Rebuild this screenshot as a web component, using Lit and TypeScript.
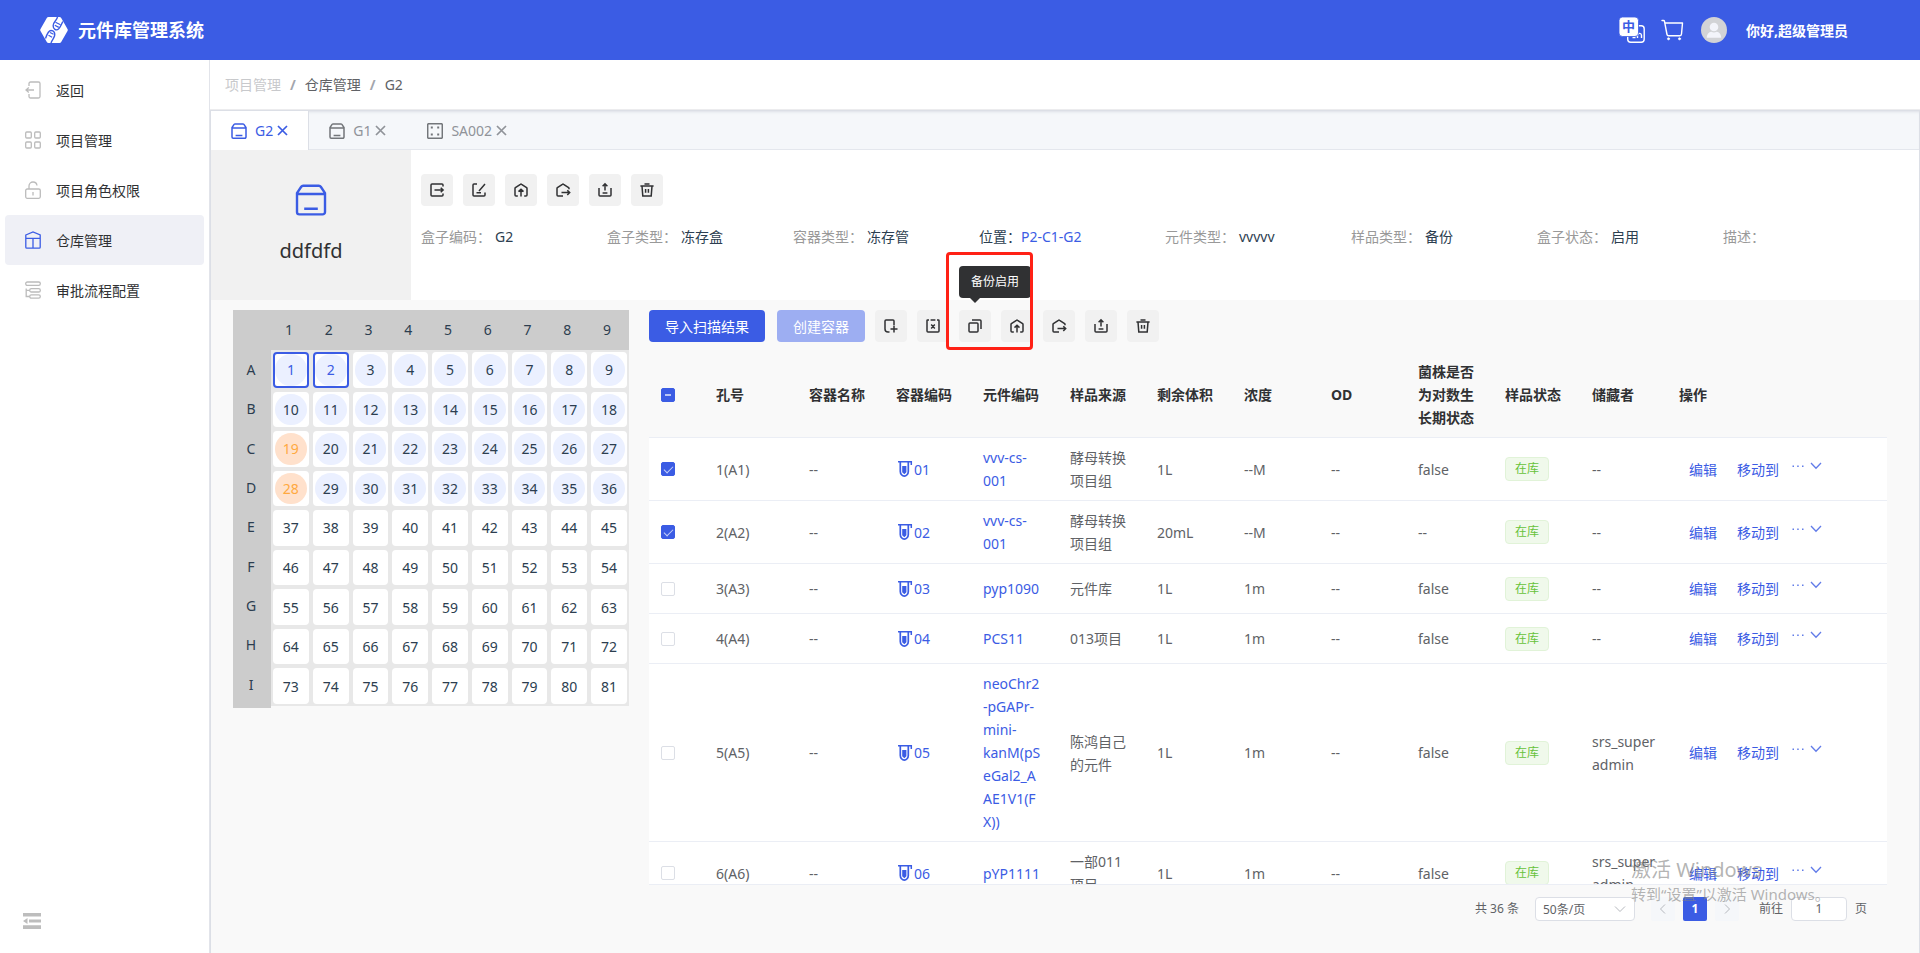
import { LitElement, html, css, svg, nothing } from "lit";
import { customElement, state } from "lit/decorators.js";
import { classMap } from "lit/directives/class-map.js";

const HOUSE = "V5.5a1 1 0 0 1 .4-.8L6.4 1.3a1 1 0 0 1 1.2 0l5 3.4a1 1 0 0 1 .4.8";

const TOOL_ICONS: Record<string, string> = {
  moveOut: "M13 3.5V2a1 1 0 0 0-1-1H2a1 1 0 0 0-1 1v10a1 1 0 0 0 1 1h10a1 1 0 0 0 1-1v-1.5M4.5 7H13M10.7 4.8L13.1 7L10.7 9.2",
  edit: "M5 1H2a1 1 0 0 0-1 1v10a1 1 0 0 0 1 1h10a1 1 0 0 0 1-1V9.5M13 1L7 8M4.5 9.8h4.5",
  storeIn: "M3.8 13H2a1 1 0 0 1-1-1" + HOUSE + "V12a1 1 0 0 1-1 1h-1.8M7 13.5V6.5M4.5 8.6L7 6.2L9.5 8.6",
  storeOut: "M7 13H2a1 1 0 0 1-1-1" + HOUSE + "V6.3M5.5 9.6H13.6M11.3 7.2L13.7 9.6L11.3 12",
  upload: "M1 5v7a1 1 0 0 0 1 1h10a1 1 0 0 0 1-1V5M7 7.5V1M4.6 3.2L7 .8L9.4 3.2M4.6 10h4.8",
  trash: "M.4 3h13.2M4.5 .9h5M2 3l.8 10h8.4L12 3M5.6 6v3.8M8.4 6v3.8",
  addTube: "M5.5 13H4a3 3 0 0 1-3-3V2a1 1 0 0 1 1-1h7a1 1 0 0 1 1 1v4M10 6.5v7M6.5 10h7",
  clear: "M3 1H1.6a.6.6 0 0 0-.6.6V12a1 1 0 0 0 1 1h10a1 1 0 0 0 1-1V1.6a.6.6 0 0 0-.6-.6H11M4.600 1h4.800M5.200 5.600l3.600 3.800M8.800 5.600l-3.600 3.800",
  copy: "M2 4h7a1 1 0 0 1 1 1v7a1 1 0 0 1-1 1H2a1 1 0 0 1-1-1V5a1 1 0 0 1 1-1zM4 1h8a1 1 0 0 1 1 1v8",
};

const toolIcon = (name: string) => html`
  <svg class="tool-icon" viewBox="0 0 14 14" aria-hidden="true"><path d=${TOOL_ICONS[name]} /></svg>
`;

const toolButton = (icon: string, label: string) => html`
  <button class="tool" type="button" aria-label=${label}>${toolIcon(icon)}</button>
`;

const boxShape = svg`
  <path d="M1 5h14M1 5V14a1.200 1.200 0 0 0 1.200 1.200h11.600A1.200 1.200 0 0 0 15 14V4.500L12.900 1.400a1.200 1.200 0 0 0-1-.5H4.100a1.200 1.200 0 0 0-1 .5L1 4.500zM4.600 12.400h6.800" />
`;

const NAV = [
  { label: "返回", icon: svg`<path d="M4 5V2.500A1.500 1.500 0 0 1 5.500 1h8A1.500 1.500 0 0 1 15 2.500v13a1.500 1.500 0 0 1-1.500 1.500h-8A1.500 1.500 0 0 1 4 15.500V13M1 9h8M3.800 6.500L1 9l2.800 2.500" />` },
  { label: "项目管理", icon: svg`<rect x=".7" y="1" width="5.600" height="6" rx="1" /><rect x="9.700" y="1" width="5.600" height="6" rx="1" /><rect x=".7" y="11" width="5.600" height="6" rx="1" /><rect x="9.700" y="11" width="5.600" height="6" rx="1" />` },
  { label: "项目角色权限", icon: svg`<rect x=".7" y="8" width="14.600" height="9.300" rx="1.500" /><path d="M4 8V5a4 4 0 0 1 4-4 4 4 0 0 1 4 3.500M8 11v3.500" />` },
  { label: "仓库管理", active: true, icon: svg`<path d="M.8 4L8 1l7.200 3v12.200a1 1 0 0 1-1 1H1.800a1 1 0 0 1-1-1zM.8 7.300h14.400M8 7.300v9.900" />` },
  { label: "审批流程配置", icon: svg`<rect x=".7" y="1" width="14.600" height="3.400" rx="1.600" /><rect x="4.700" y="7.600" width="10.600" height="3.400" rx="1.600" /><rect x="4.700" y="13.800" width="10.600" height="3.400" rx="1.600" /><path d="M1.200 7.500v8h3.500M1.200 9.300h3.500" />` },
];

const INFO = [
  { label: "盒子编码：", value: "G2" },
  { label: "盒子类型：", value: "冻存盒" },
  { label: "容器类型：", value: "冻存管" },
  { label: "位置：", value: "P2-C1-G2", link: true },
  { label: "元件类型：", value: "vvvvv" },
  { label: "样品类型：", value: "备份" },
  { label: "盒子状态：", value: "启用" },
  { label: "描述：", value: "" },
];

const HEADERS = ["孔号", "容器名称", "容器编码", "元件编码", "样品来源", "剩余体积", "浓度", "OD", "菌株是否为对数生长期状态", "样品状态", "储藏者", "操作"];

interface Row {
  hole: string;
  code: string;
  part: string;
  source: string;
  volume: string;
  density: string;
  log: string;
  owner: string;
}

const ROWS: Row[] = [
  { hole: "1(A1)", code: "01", part: "vvv-cs-\n001", source: "酵母转换项目组", volume: "1L", density: "--M", log: "false", owner: "--" },
  { hole: "2(A2)", code: "02", part: "vvv-cs-\n001", source: "酵母转换项目组", volume: "20mL", density: "--M", log: "--", owner: "--" },
  { hole: "3(A3)", code: "03", part: "pyp1090", source: "元件库", volume: "1L", density: "1m", log: "false", owner: "--" },
  { hole: "4(A4)", code: "04", part: "PCS11", source: "013项目", volume: "1L", density: "1m", log: "false", owner: "--" },
  { hole: "5(A5)", code: "05", part: "neoChr2\n-pGAPr-\nmini-\nkanM(pS\neGal2_A\nAE1V1(F\nX))", source: "陈鸿自己的元件", volume: "1L", density: "1m", log: "false", owner: "srs_super\nadmin" },
  { hole: "6(A6)", code: "06", part: "pYP1111", source: "一部011\n项目", volume: "1L", density: "1m", log: "false", owner: "srs_super\nadmin" },
];

@customElement("app-root")
export class AppRoot extends LitElement {
  @state() private selected = new Set<number>([0, 1]);

  static styles = css`
    :host {
      --brand: #3b5ce4;
      --line: #ebeef5;
      display: flex;
      flex-direction: column;
      height: 100vh;
      overflow: hidden;
      position: relative;
      font: 14px/23px "Noto Sans", "Noto Sans CJK SC", sans-serif;
      color: #303133;
      background: #fff;
    }
    * { box-sizing: border-box; }
    button, input, select { font: inherit; color: inherit; margin: 0; }
    button { border: 0; background: none; padding: 0; cursor: pointer; }
    a { color: inherit; text-decoration: none; }
    svg { display: block; fill: none; stroke: currentColor; flex: none; }

    .header {
      display: flex;
      align-items: center;
      height: 60px;
      flex: none;
      padding: 0 72px 0 40px;
      background: var(--brand);
      color: #fff;
    }
    .logo { width: 28px; height: 26px; margin-right: 10px; stroke: none; }
    .title { margin: 0; font-size: 18px; font-weight: 700; flex: 1; }
    .lang { width: 26px; height: 26px; margin-right: 16px; }
    .lang text { font: 700 13px "Noto Sans CJK SC", sans-serif; stroke: none; fill: var(--brand); }
    .cart { width: 23px; height: 22px; margin-right: 17px; }
    .avatar { width: 26px; height: 26px; margin-right: 19px; stroke: none; }
    .user { font-weight: 700; }

    .body { flex: 1; display: flex; min-height: 0; }
    .sidebar {
      width: 210px;
      flex: none;
      display: flex;
      flex-direction: column;
      justify-content: space-between;
      padding: 5px 5px 24px;
      border-right: 1px solid #e2e4ea;
    }
    .nav-item {
      display: flex;
      align-items: center;
      gap: 15px;
      height: 50px;
      padding: 0 20px;
      border-radius: 4px;
    }
    .nav-item.active { background: #eff0f6; }
    .nav-icon { width: 16px; height: 18px; color: #bcbcbc; stroke-width: 1.300; }
    .active .nav-icon { color: var(--brand); }
    .collapse { margin-left: 18px; width: 18px; color: #bdbdbd; }
    .collapse svg { width: 18px; height: 16px; fill: currentColor; stroke: none; }

    .main { flex: 1; min-width: 0; display: flex; flex-direction: column; }
    .crumbs {
      display: flex;
      align-items: center;
      gap: 8px;
      height: 50px;
      flex: none;
      padding: 0 15px;
      border-bottom: 1px solid #ececee;
      color: #606266;
    }
    .crumbs a:first-child { color: #c8c9cc; }
    .sep { font-weight: 700; color: #a3a6ad; padding: 0 1px; }

    .card {
      flex: 1;
      min-height: 0;
      display: flex;
      flex-direction: column;
      border: 1px solid #dcdfe6;
      border-bottom: 0;
      background: #f9f9f9;
    }
    .tabs {
      display: flex;
      height: 39px;
      flex: none;
      background: #f5f7fa;
      border-bottom: 1px solid #e4e7ed;
      box-shadow: inset 0 3px 3px -2px #dcdfe6;
    }
    .tab {
      display: flex;
      align-items: center;
      gap: 8px;
      padding: 0 20px;
      height: 39px;
      color: #909399;
      border-right: 1px solid transparent;
    }
    .tab.active { background: #fff; color: var(--brand); border-right-color: #dcdfe6; }
    .tab-icon { width: 16px; height: 16px; stroke-width: 1.500; color: #73767a; }
    .active .tab-icon { color: var(--brand); }
    .tab-label { display: flex; align-items: center; gap: 4px; }
    .close { width: 11px; height: 11px; stroke-width: 1.700; }

    .summary { display: flex; min-height: 150px; background: #fff; }
    .box {
      width: 200px;
      flex: none;
      display: flex;
      flex-direction: column;
      align-items: center;
      justify-content: center;
      gap: 20px;
      background: #f1f1f1;
      font-size: 20px;
      line-height: 30px;
    }
    .box svg { width: 32px; height: 32px; color: var(--brand); stroke-width: 1.200; }
    .details { flex: 1; padding: 24px 10px; display: flex; flex-direction: column; gap: 20px; }
    .tools { display: flex; gap: 10px; }
    .tool {
      width: 32px;
      height: 32px;
      display: grid;
      place-items: center;
      border-radius: 4px;
      background: #f1f1f1;
      color: #303133;
    }
    .tool-icon { width: 14px; height: 14px; stroke-width: 1.500; overflow: visible; }
    .facts { display: grid; grid-template-columns: repeat(8, 1fr); margin: 0; color: #2c3e50; line-height: 22px; }
    .fact { display: flex; gap: 4px; }
    .fact dt { color: #999; }
    .fact.linked dt { color: #2c3e50; }
    .fact dd { margin: 0; }
    .fact.linked dd { color: var(--brand); }
    .fact.linked { gap: 0; }

    .content {
      flex: 1;
      min-height: 0;
      display: flex;
      align-items: stretch;
      gap: 20px;
      padding: 10px 32px 0 22px;
    }
    .plate {
      flex: none;
      align-self: flex-start;
      width: 396px;
      display: grid;
      grid-template-columns: 38px 1fr;
      grid-template-rows: 40px 358px;
      color: #2c3e50;
      background: linear-gradient(#ccc, #ccc) 0 0 / 38px 100% no-repeat;
      text-align: center;
    }
    .cols {
      grid-column: 2;
      display: grid;
      grid-template-columns: repeat(9, 1fr);
      gap: 4px;
      align-items: center;
      padding: 0 4px 2px 0;
      background: #ccc;
    }
    .letters { display: grid; grid-template-rows: repeat(9, 1fr); align-items: center; padding: 0 2px 4px 0; }
    .wells {
      display: grid;
      grid-template: repeat(9, 1fr) / repeat(9, 1fr);
      gap: 4px;
      padding: 2px;
      margin-bottom: 2px;
      background: #e8e8e8;
    }
    .well {
      display: grid;
      place-items: center;
      border-radius: 4px;
      border: 2px solid #fff;
      background: #fff;
      min-width: 0;
      min-height: 0;
    }
    .well span { width: 100%; height: 100%; display: grid; place-items: center; border-radius: 50%; }
    .well.filled span { background: #ebf0ff; }
    .well.warn span { background: #ffe1cc; color: #ffa940; }
    .well.picked { border-color: var(--brand); color: var(--brand); }

    .panel { flex: 1; min-width: 0; display: flex; flex-direction: column; }
    .actions { display: flex; gap: 10px; margin-bottom: 10px; }
    .primary-group { display: flex; gap: 12px; }
    .primary {
      height: 32px;
      padding: 0 16px;
      border-radius: 4px;
      background: var(--brand);
      color: #fff;
    }
    .primary:disabled { background: #9daef2; }
    .hinted { position: relative; }
    .tooltip {
      position: absolute;
      left: 0;
      bottom: 44px;
      z-index: 1;
      padding: 0 12px;
      border-radius: 4px;
      background: #303133;
      color: #fff;
      font-size: 12px;
      line-height: 32px;
      white-space: nowrap;
    }
    .tooltip::after {
      content: "";
      position: absolute;
      left: 11px;
      top: 100%;
      border: 5px solid transparent;
      border-top-color: #303133;
    }
    .marker {
      position: absolute;
      left: -13px;
      top: -58px;
      z-index: 2;
      width: 87px;
      height: 98px;
      border: 3px solid #ff2116;
      border-radius: 4px;
      pointer-events: none;
    }

    .table-wrap { flex: 1; min-height: 0; overflow: hidden; border-bottom: 1px solid var(--line); }
    table { width: 100%; table-layout: fixed; border-collapse: separate; border-spacing: 0; }
    .c-check { width: 55px; }
    .c-hole { width: 93px; }
    .c-ops { width: 220px; }
    th, td { padding: 8px 12px; text-align: left; border-bottom: 1px solid var(--line); white-space: pre-line; }
    th { color: #303133; font-weight: 700; height: 86px; }
    td { color: #606266; background: #fff; height: 50px; }
    .link { color: var(--brand); }
    .code { display: flex; align-items: center; color: var(--brand); }
    .tube { width: 18px; height: 18px; }
    .tag {
      display: block;
      width: 44px;
      border: 1px solid #e1f3d8;
      border-radius: 4px;
      background: #f0f9eb;
      color: #67c23a;
      font-size: 12px;
      line-height: 22px;
      text-align: center;
    }
    .ops { display: flex; align-items: flex-start; padding: 0 10px; color: var(--brand); white-space: nowrap; }
    .ops button + button { margin-left: 20px; }
    .ops .more { display: flex; gap: 4px; }
    .ops button + .more { margin-left: 12px; }
    .ops svg { width: 14px; height: 16px; opacity: 0.8; }

    input[type="checkbox"] {
      appearance: none;
      display: block;
      width: 14px;
      height: 14px;
      border: 1px solid #dcdfe6;
      border-radius: 2px;
      background: #fff;
      position: relative;
    }
    input[type="checkbox"]:checked, input[type="checkbox"]:indeterminate { background: var(--brand); border-color: var(--brand); }
    input[type="checkbox"]:checked::after {
      content: "";
      position: absolute;
      left: 4px;
      top: 1px;
      width: 4px;
      height: 8px;
      border: solid #c5cff7;
      border-width: 0 1px 1px 0;
      transform: rotate(45deg);
    }
    input[type="checkbox"]:indeterminate::after {
      content: "";
      position: absolute;
      left: 3px;
      top: 5px;
      width: 6px;
      height: 2px;
      background: #b9c5f5;
    }

    .pager {
      display: flex;
      align-items: center;
      justify-content: flex-end;
      flex: none;
      padding: 12px 20px 32px 0;
      color: #606266;
      font-size: 12px;
      line-height: 24px;
    }
    .size { display: flex; align-items: center; margin: 0 16px; position: relative; }
    .size select {
      appearance: none;
      width: 100px;
      height: 24px;
      padding: 0 7px;
      border: 1px solid #dcdfe6;
      border-radius: 4px;
      background: #fff;
    }
    .size svg { position: absolute; right: 8px; width: 14px; height: 14px; color: #b5b8be; pointer-events: none; }
    .pages { display: flex; gap: 8px; }
    .pages button {
      width: 24px;
      height: 24px;
      display: grid;
      place-items: center;
      border-radius: 2px;
      background: #f5f7fa;
      color: #b5b8be;
    }
    .pages button.current { background: var(--brand); color: #fff; font-weight: 700; }
    .pages svg { width: 12px; height: 12px; }
    .jump { display: flex; gap: 8px; margin-left: 20px; }
    .jump input {
      width: 56px;
      height: 24px;
      border: 1px solid #dcdfe6;
      border-radius: 4px;
      background: #fff;
      text-align: center;
    }

    .watermark {
      position: absolute;
      right: 85px;
      bottom: 48px;
      width: 204px;
      z-index: 3;
      color: rgba(130, 130, 130, 0.6);
      font-size: 15px;
      line-height: 22px;
      pointer-events: none;
      white-space: nowrap;
    }
    .watermark strong { display: block; font-weight: 400; font-size: 20px; line-height: 26px; }
  `;

  private toggle(index: number) {
    const next = new Set(this.selected);
    next.has(index) ? next.delete(index) : next.add(index);
    this.selected = next;
  }

  private toggleAll(event: Event) {
    const on = (event.target as HTMLInputElement).checked;
    this.selected = on ? new Set(ROWS.map((_, i) => i)) : new Set();
  }

  private renderHeader() {
    return html`
      <header class="header">
        <svg class="logo" viewBox="0 0 28 26" aria-hidden="true">
          <path fill="#fff" d="M8.500 0h11a2 2 0 0 1 1.700 1l6.300 11a2 2 0 0 1 0 2l-6.300 11a2 2 0 0 1-1.700 1h-11a2 2 0 0 1-1.700-1L.5 14a2 2 0 0 1 0-2L6.800 1a2 2 0 0 1 1.700-1z" />
          <g fill="none" stroke="#3b5ce4" stroke-width="1.400">
            <path d="M17.500 0C16.500 4 13.500 4.500 13.200 8.500c-.2 3.500 3 5.500 5.300 3.500 1.500-1.500 3-4.500 4.300-7.500" />
            <path d="M5.500 21.500C7 17 8.500 13.500 11 13.500c3 0 4.300 2.500 3.500 5.500-.7 2.500-2.500 4-3.500 7" />
            <path d="M15.500 5.200l5 2.600M14.800 8.200l4 2.200M10 15.500l3.600 1.800M8.500 18.300l3.600 2" stroke-width="1.200" />
          </g>
        </svg>
        <h1 class="title">元件库管理系统</h1>
        <button class="lang" type="button" aria-label="切换语言">
          <svg viewBox="0 0 26 26" width="26" height="26">
            <rect x="8.700" y="8.700" width="16.500" height="16.500" rx="3" stroke-width="1.400" />
            <path d="M13.500 20.500h3M18.500 21v-4M18.500 18.500a2 2 0 0 1 4-.3V21" stroke-width="1.400" />
            <rect width="19.500" height="19.500" rx="3.500" fill="#fff" stroke="#3b5ce4" stroke-width=".8" />
            <text x="3" y="14">中</text>
          </svg>
        </button>
        <button class="cart" type="button" aria-label="购物车">
          <svg viewBox="0 0 23 22" width="23" height="22" stroke-width="1.400" stroke-linejoin="round" stroke-linecap="round">
            <path d="M1 1.500h1.500a1 1 0 0 1 1 .8L6 15.500a1.500 1.500 0 0 0 1.500 1.200h11.500M3.800 4h17.700l-1 11a1.800 1.800 0 0 1-1.700 1.700" />
            <circle cx="7.500" cy="19.800" r="1.100" fill="#fff" stroke-width=".6" /><circle cx="18.500" cy="19.800" r="1.100" fill="#fff" stroke-width=".6" />
          </svg>
        </button>
        <svg class="avatar" viewBox="0 0 26 26" aria-hidden="true">
          <circle cx="13" cy="13" r="13" fill="#d2d3d6" />
          <circle cx="13" cy="10" r="4.300" fill="#f3f4fa" />
          <path d="M5.800 20.800c0-3.500 2-5.800 4.500-6.100a5.500 5.500 0 0 0 5.400 0c2.500.3 4.500 2.600 4.500 6.100z" fill="#f3f4fa" />
        </svg>
        <span class="user">你好,超级管理员</span>
      </header>
    `;
  }

  private renderSidebar() {
    return html`
      <aside class="sidebar">
        <nav>
          ${NAV.map(
            (item) => html`
              <a href="#" class=${classMap({ "nav-item": true, active: !!item.active })}>
                <svg class="nav-icon" viewBox="0 0 16 18" aria-hidden="true">${item.icon}</svg>${item.label}
              </a>
            `
          )}
        </nav>
        <button class="collapse" type="button" aria-label="收起菜单">
          <svg viewBox="0 0 18 16"><path d="M0 0h18v3.500H0zM6 6.500h12v3H6zM0 12.300h18V16H0zM0 8l4.500-3v6z" /></svg>
        </button>
      </aside>
    `;
  }

  private renderTab(label: string, rack: boolean, active: boolean) {
    return html`
      <a href="#" class=${classMap({ tab: true, active })}>
        <svg class="tab-icon" viewBox="0 0 16 16" aria-hidden="true">
          ${rack
            ? svg`<rect x=".7" y=".7" width="14.600" height="14.600" rx="1" /><path d="M3.800 4.600h2M10.200 4.600h2M3.800 11.400h2M10.200 11.400h2" stroke-width="2" />`
            : boxShape}
        </svg>
        <span class="tab-label">${label}<svg class="close" viewBox="0 0 11 11"><path d="M1 1l9 9M10 1l-9 9" /></svg></span>
      </a>
    `;
  }

  private renderPlate() {
    return html`
      <section class="plate">
        <div class="cols">${[1, 2, 3, 4, 5, 6, 7, 8, 9].map((n) => html`<span>${n}</span>`)}</div>
        <div class="letters">${[..."ABCDEFGHI"].map((c) => html`<span>${c}</span>`)}</div>
        <div class="wells">
          ${Array.from({ length: 81 }, (_, i) => i + 1).map((n) => {
            const cls = { well: true, filled: n <= 36, warn: n === 19 || n === 28, picked: this.selected.has(n - 1) };
            return html`<button type="button" class=${classMap(cls)}><span>${n}</span></button>`;
          })}
        </div>
      </section>
    `;
  }

  private renderRow(row: Row, index: number) {
    return html`
      <tr>
        <td><input type="checkbox" aria-label=${row.hole} .checked=${this.selected.has(index)} @change=${() => this.toggle(index)} /></td>
        <td>${row.hole}</td>
        <td>--</td>
        <td><a class="code" href="#"><svg class="tube" viewBox="0 0 18 18" aria-hidden="true">
              <path d="M2 1.800h13.300v3.200" stroke-width="1.500" />
              <path d="M4.300 2v9.500c0 2.500 2 4.600 4 4.600s4-2.100 4-4.600V2" stroke-width="1.700" />
              <path d="M6.200 6h4.200v6.300L8.300 14.200l-2.100-1.900z" fill="currentColor" stroke="none" />
            </svg>${row.code}</a></td>
        <td><a class="link" href="#">${row.part}</a></td>
        <td>${row.source}</td>
        <td>${row.volume}</td>
        <td>${row.density}</td>
        <td>--</td>
        <td>${row.log}</td>
        <td><span class="tag">在库</span></td>
        <td>${row.owner}</td>
        <td><div class="ops"><button type="button">编辑</button><button type="button">移动到</button><button type="button" class="more" aria-label="更多"><svg viewBox="0 0 14 16"><path fill="currentColor" stroke="none" d="M1.500 7.500h1.500V9H1.500zM6.200 7.500h1.500V9H6.200zM11 7.500h1.500V9H11z" /></svg><svg viewBox="0 0 14 16" stroke-width="1.300"><path d="M2 5l5 5.300L12 5" /></svg></button></div></td>
      </tr>
    `;
  }

  render() {
    const count = this.selected.size;
    return html`
      ${this.renderHeader()}
      <div class="body">
        ${this.renderSidebar()}
        <main class="main">
          <nav class="crumbs">
            <a href="#">项目管理</a><span class="sep">/</span><a href="#">仓库管理</a><span class="sep">/</span><span>G2</span>
          </nav>
          <div class="card">
            <nav class="tabs">
              ${this.renderTab("G2", false, true)}${this.renderTab("G1", false, false)}${this.renderTab("SA002", true, false)}
            </nav>
            <section class="summary">
              <div class="box"><svg viewBox="0 0 16 16" aria-hidden="true">${boxShape}</svg>ddfdfd</div>
              <div class="details">
                <div class="tools">
                  ${toolButton("moveOut", "移出")}${toolButton("edit", "编辑")}${toolButton("storeIn", "入库")}
                  ${toolButton("storeOut", "出库")}${toolButton("upload", "导出")}${toolButton("trash", "删除")}
                </div>
                <dl class="facts">
                  ${INFO.map(
                    (f) => html`<div class=${classMap({ fact: true, linked: !!f.link })}><dt>${f.label}</dt><dd>${f.value || nothing}</dd></div>`
                  )}
                </dl>
              </div>
            </section>
            <div class="content">
              ${this.renderPlate()}
              <section class="panel">
                <div class="actions">
                  <div class="primary-group">
                    <button class="primary" type="button">导入扫描结果</button>
                    <button class="primary" type="button" disabled>创建容器</button>
                  </div>
                  ${toolButton("addTube", "添加")}${toolButton("clear", "清空")}
                  <div class="hinted">
                    ${toolButton("copy", "备份启用")}
                    <span class="tooltip" role="tooltip">备份启用</span>
                    <span class="marker"></span>
                  </div>
                  ${toolButton("storeIn", "入库")}${toolButton("storeOut", "出库")}${toolButton("upload", "导出")}${toolButton("trash", "删除")}
                </div>
                <div class="table-wrap">
                  <table>
                    <colgroup>
                      <col class="c-check" /><col class="c-hole" />
                      ${Array.from({ length: 10 }, () => html`<col />`)}
                      <col class="c-ops" />
                    </colgroup>
                    <thead>
                      <tr>
                        <th><input type="checkbox" aria-label="全选" .checked=${count === ROWS.length} .indeterminate=${count > 0 && count < ROWS.length} @change=${this.toggleAll} /></th>
                        ${HEADERS.map((h) => html`<th>${h}</th>`)}
                      </tr>
                    </thead>
                    <tbody>${ROWS.map((row, i) => this.renderRow(row, i))}</tbody>
                  </table>
                </div>
                <footer class="pager">
                  <span>共 36 条</span>
                  <label class="size">
                    <select aria-label="每页条数"><option>50条/页</option><option>100条/页</option></select>
                    <svg viewBox="0 0 14 14"><path d="M2 4.500l5 5 5-5" /></svg>
                  </label>
                  <div class="pages">
                    <button type="button" aria-label="上一页"><svg viewBox="0 0 12 12"><path d="M8 1.500L3.500 6 8 10.500" /></svg></button>
                    <button type="button" class="current">1</button>
                    <button type="button" aria-label="下一页"><svg viewBox="0 0 12 12"><path d="M4 1.500L8.500 6 4 10.500" /></svg></button>
                  </div>
                  <label class="jump">前往<input type="text" value="1" />页</label>
                </footer>
              </section>
            </div>
          </div>
        </main>
      </div>
      <div class="watermark"><strong>激活 Windows</strong>转到“设置”以激活 Windows。</div>
    `;
  }
}
